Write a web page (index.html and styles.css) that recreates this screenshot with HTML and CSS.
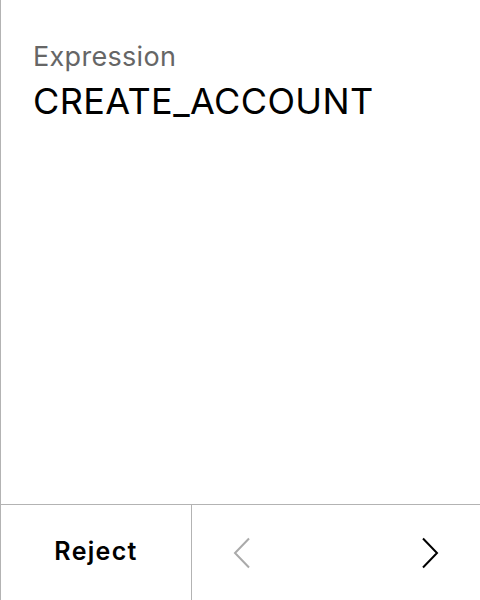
FILE: index.html
```html
<!DOCTYPE html>
<html>
<head>
<meta charset="utf-8">
<link rel="stylesheet" href="styles.css">
</head>
<body>
<div class="panel">
  <div class="content">
    <div class="label">Expression</div>
    <div class="value">CREATE_ACCOUNT</div>
  </div>
  <div class="actions">
    <button class="reject">Reject</button>
    <div class="nav">
      <button class="chev disabled" aria-label="Previous">
        <svg width="18" height="32" viewBox="0 0 18 32"><polyline points="16,1.5 2,16 16,30.5" fill="none" stroke="currentColor" stroke-width="2"/></svg>
      </button>
      <button class="chev" aria-label="Next">
        <svg width="18" height="32" viewBox="0 0 18 32"><polyline points="2,1.5 16,16 2,30.5" fill="none" stroke="currentColor" stroke-width="2"/></svg>
      </button>
    </div>
  </div>
</div>
</body>
</html>
```
FILE: styles.css
```css
* { box-sizing: border-box; }
html, body { margin: 0; padding: 0; background: #fff; }
body { font-family: Inter, "Noto Sans", sans-serif; }
.panel {
  width: 480px;
  height: 600px;
  border-left: 1px solid #b3b3b3;
  display: flex;
  flex-direction: column;
}
.content {
  flex: 1;
  padding: 41px 32px 0;
}
.label {
  font-size: 27px;
  letter-spacing: 0.3px;
  color: #666;
  line-height: 32px;
}
.value {
  margin-top: 6px;
  font-size: 36px;
  letter-spacing: 0.4px;
  color: #000;
  line-height: 44px;
}
.actions {
  height: 96px;
  border-top: 1px solid #b3b3b3;
  display: flex;
}
.reject {
  width: 191px;
  border: none;
  border-right: 1px solid #b3b3b3;
  background: #fff;
  font-family: inherit;
  font-size: 25px;
  font-weight: 600;
  letter-spacing: 1.3px;
  color: #000;
  padding: 0 0 4px;
}
.nav {
  flex: 1;
  display: flex;
  justify-content: space-between;
  align-items: center;
  padding: 0 26px;
}
.chev {
  width: 48px;
  height: 48px;
  border: none;
  background: none;
  padding: 0;
  display: flex;
  align-items: center;
  justify-content: center;
  color: #000;
}
.chev.disabled { color: #aaa; }
```
